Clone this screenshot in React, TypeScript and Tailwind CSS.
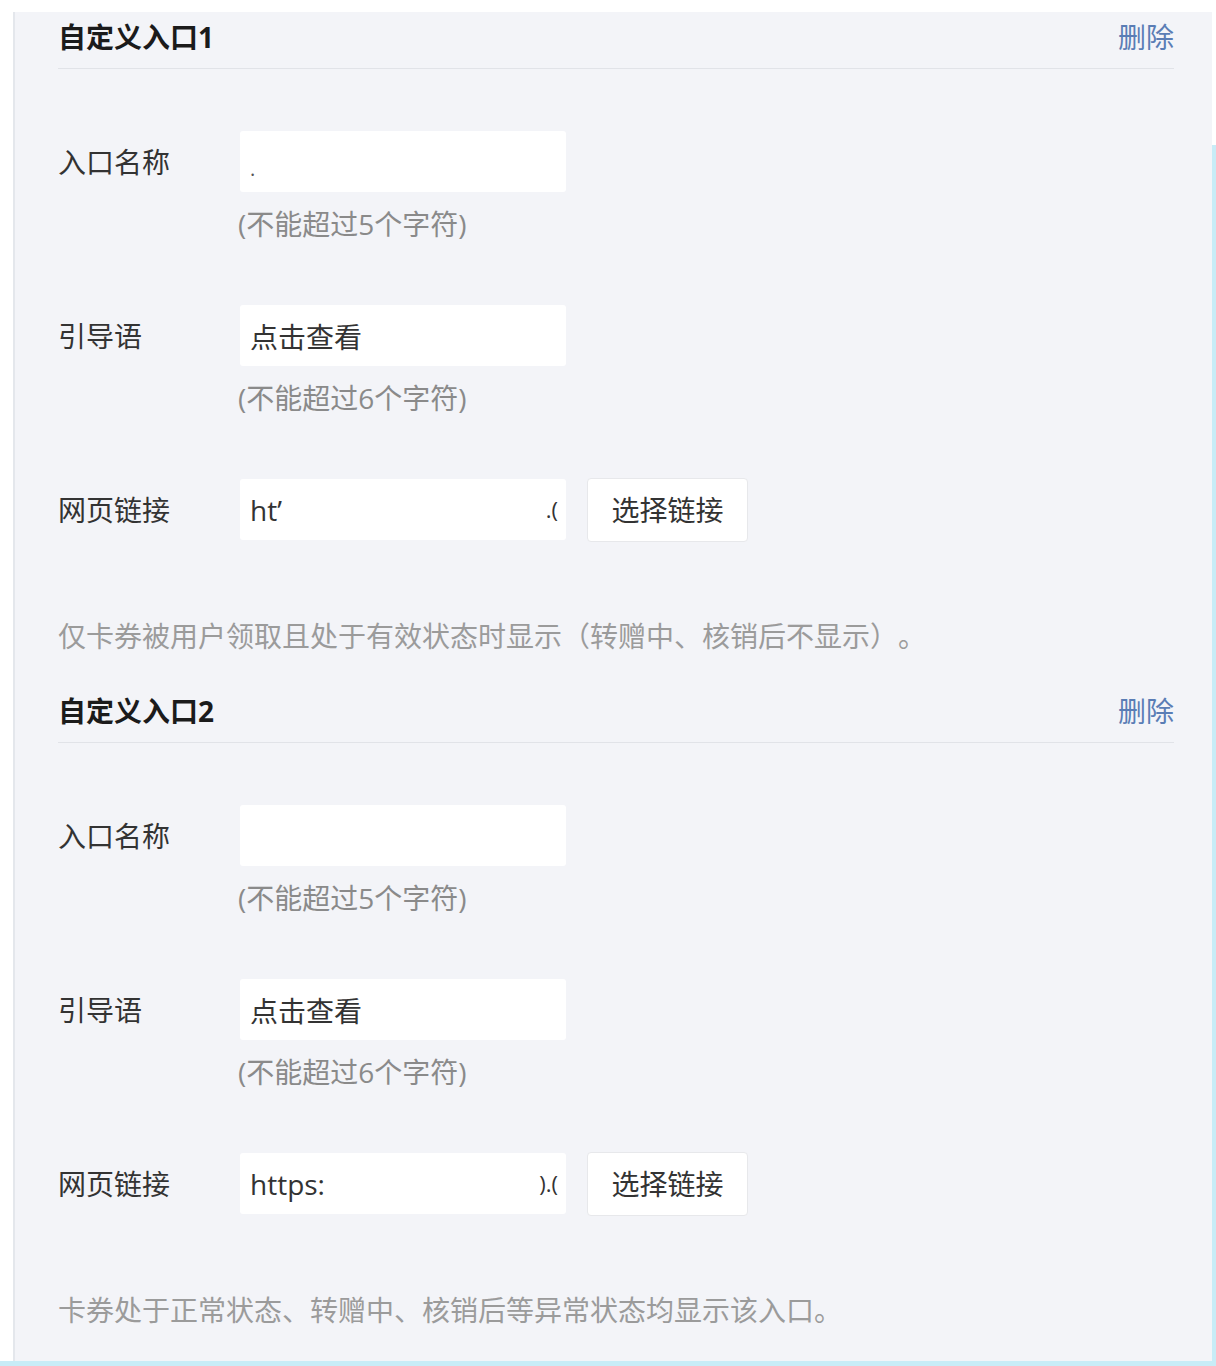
import React from "react";

const FONT = { fontFamily: "'Open Sans', 'Noto Sans CJK SC', sans-serif" };

function Field({
  label,
  value,
  hint,
  right,
}: {
  label: string;
  value?: React.ReactNode;
  hint?: string;
  right?: React.ReactNode;
}) {
  return (
    <div className="flex items-start">
      <div className="w-[182px] h-[61px] flex items-center text-[28px] text-[#333] leading-none shrink-0">
        {label}
      </div>
      <div className="flex flex-col">
        <div className="flex items-start">
          <div className="w-[326px] h-[61px] bg-white rounded-[3px] flex items-center pl-[10px] pr-[8px] text-[28px] text-[#333] whitespace-nowrap">
            {value}
          </div>
          {right}
        </div>
        {hint && (
          <div className="mt-[16px] text-[28px] leading-[32px] text-[#8a8a8a] -ml-[2px]">{hint}</div>
        )}
      </div>
    </div>
  );
}

function LinkButton() {
  return (
    <div className="ml-[21px] -mt-[1px] w-[161px] h-[64px] bg-white border border-[#e7e8eb] rounded-[4px] flex items-center justify-center text-[28px] text-[#333]">
      选择链接
    </div>
  );
}

function Section({
  title,
  name,
  link,
  note,
}: {
  title: string;
  name: React.ReactNode;
  link: React.ReactNode;
  note: string;
}) {
  return (
    <div className="flex flex-col">
      <div className="flex items-center justify-between pt-[5px] pb-[11px] border-b border-[#e1e3e8]">
        <div className="text-[28px] leading-[40px] font-bold text-[#1b1b1b]">{title}</div>
        <div className="text-[28px] leading-[40px] text-[#5a7db5]">删除</div>
      </div>
      <div className="mt-[62px] flex flex-col gap-[65px]">
        <Field label="入口名称" value={name} hint="(不能超过5个字符)" />
        <Field label="引导语" value={<span className="pt-[2px]">点击查看</span>} hint="(不能超过6个字符)" />
        <Field label="网页链接" value={link} right={<LinkButton />} />
      </div>
      <div className="mt-[74px] text-[28px] leading-[40px] text-[#9b9b9b] whitespace-nowrap [text-spacing-trim:space-all]">
        {note}
      </div>
    </div>
  );
}

export default function App() {
  return (
    <div className="w-[1216px] h-[1366px] bg-white flex flex-col overflow-hidden" style={FONT}>
      <div className="h-[12px] shrink-0" />
      <div className="flex flex-1 min-h-0">
        <div className="w-[13px] shrink-0 bg-white" />
        <div className="w-[2px] shrink-0 bg-[#e4e7ec]" />
        <div className="w-[1197px] bg-[#f3f4f8] pl-[43px] pr-[38px]">
          <Section
            title="自定义入口1"
            name={<span className="text-[#555] text-[20px] pt-[14px]">.</span>}
            link={
              <div className="flex w-full items-center justify-between whitespace-nowrap">
                <span>ht’</span>
                <span className="text-[22px]">.(</span>
              </div>
            }
            note="仅卡券被用户领取且处于有效状态时显示（转赠中、核销后不显示）。"
          />
          <div className="h-[30px]" />
          <Section
            title="自定义入口2"
            name={null}
            link={
              <div className="flex w-full items-center justify-between whitespace-nowrap">
                <span>https:</span>
                <span className="text-[22px]">).(</span>
              </div>
            }
            note="卡券处于正常状态、转赠中、核销后等异常状态均显示该入口。"
          />
        </div>
        <div className="w-[4px] shrink-0 flex flex-col">
          <div className="h-[133px] bg-white" />
          <div className="flex-1 bg-[#c8ecf7]" />
        </div>
      </div>
      <div className="h-[5px] shrink-0 bg-[#c8ecf7]" />
    </div>
  );
}
